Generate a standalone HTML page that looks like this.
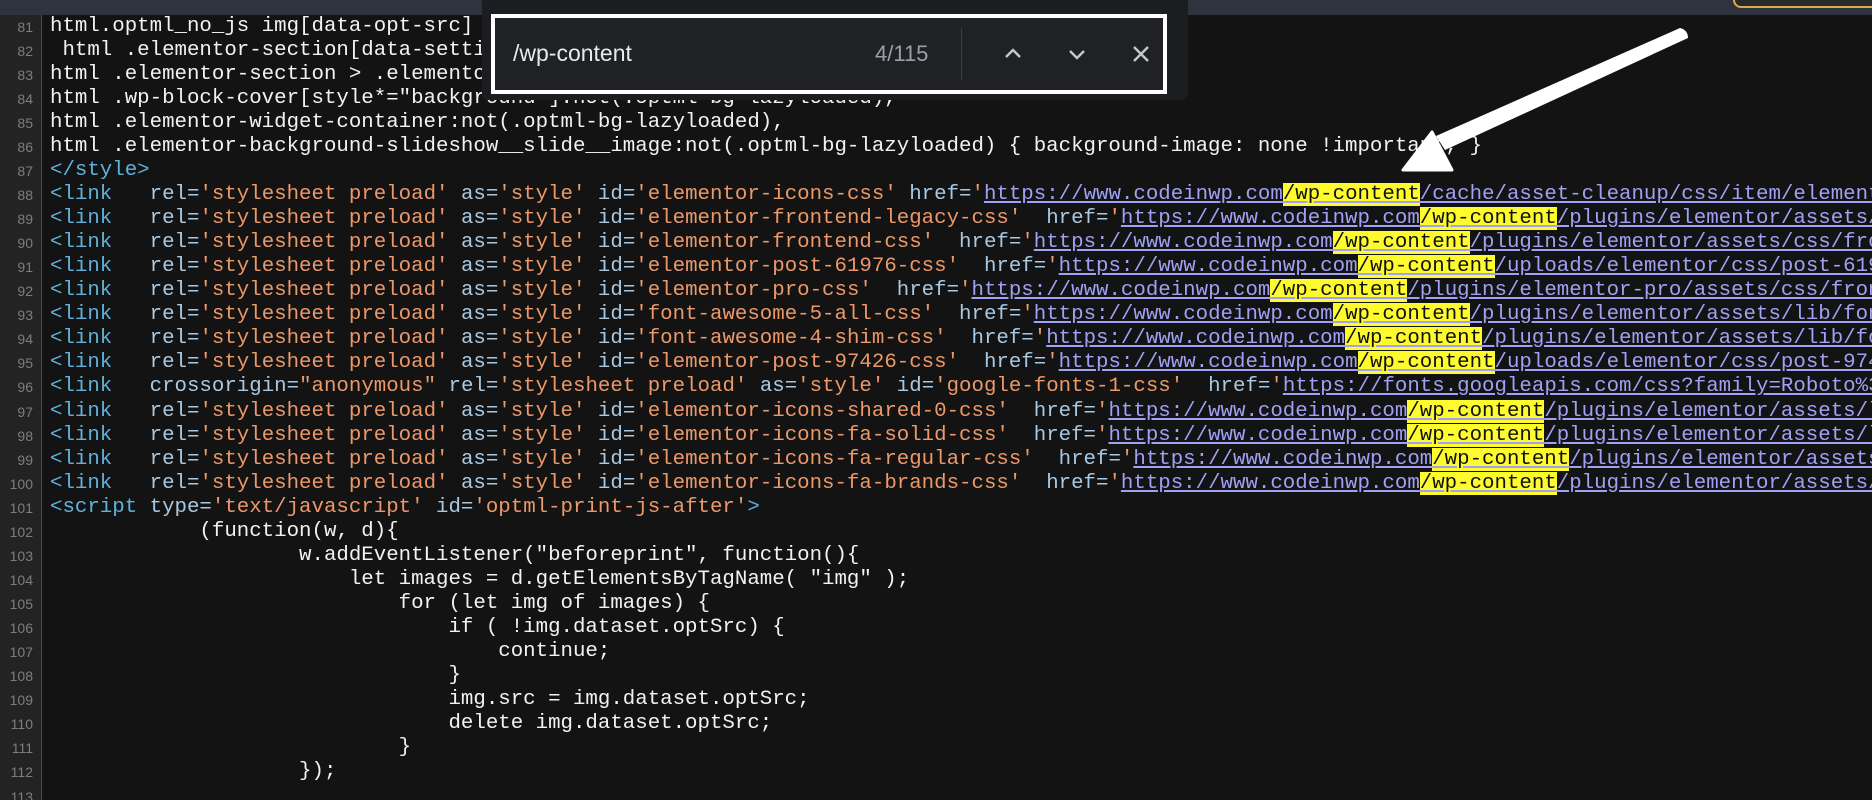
<!DOCTYPE html>
<html><head><meta charset="utf-8"><style>
html,body{margin:0;padding:0;width:1872px;height:800px;overflow:hidden;background:#131313;position:relative;}
#top{position:absolute;left:0;top:0;width:1872px;height:15px;background:#2f333d;}
#gut{position:absolute;left:0;top:15px;width:41px;height:785px;background:#232323;border-right:1px solid #4a4a4a;}
#nums{position:absolute;left:0;top:14.5px;width:33px;text-align:right;font:14px "Liberation Sans",sans-serif;color:#7d7d7d;line-height:24.07px;}
#code{position:absolute;left:50px;top:14.5px;width:1822px;height:786px;overflow:hidden;font:20.75px "Liberation Mono",monospace;color:#f2f2f2;line-height:24.07px;}
#code div{height:24.07px;white-space:pre;}
.t{color:#5fb2dc}.a{color:#a9c9e2}.v{color:#ec9869}.u{color:#a0a0f4;text-decoration:underline;text-underline-offset:2px}
.h{background:#fdfb2e;color:#111;text-decoration:underline;text-decoration-color:#a0a0f4}
#panel{position:absolute;left:482px;top:0;width:706px;height:100px;background:#1c1d20;border-radius:0 0 6px 6px;}
#box{position:absolute;left:491px;top:14px;width:668px;height:72px;border:4px solid #fff;background:#202124;font-family:"Liberation Sans",sans-serif;}
#q{position:absolute;left:18px;top:22px;font-size:23px;color:#e8eaed;}
#cnt{position:absolute;left:380px;top:23px;font-size:22px;color:#9aa0a6;}
#div{position:absolute;left:466px;top:10px;width:1px;height:52px;background:#3c3e42;}
#tr{position:absolute;left:1733px;top:-10px;width:160px;height:14px;border:2px solid #d9ab4b;border-radius:8px;background:#2a2a2a;}
</style></head><body>
<div id="top"></div>
<div id="tr"></div>
<div id="gut"></div>
<div id="nums">81<br>82<br>83<br>84<br>85<br>86<br>87<br>88<br>89<br>90<br>91<br>92<br>93<br>94<br>95<br>96<br>97<br>98<br>99<br>100<br>101<br>102<br>103<br>104<br>105<br>106<br>107<br>108<br>109<br>110<br>111<br>112<br>113</div>
<div id="code"><div>html.optml_no_js img[data-opt-src] { opacity: 0 !important; }</div><div> html .elementor-section[data-settings*="background_background"]:not(.optml-bg-lazyloaded),</div><div>html .elementor-section &gt; .elementor-background-overlay:not(.optml-bg-lazyloaded),</div><div>html .wp-block-cover[style*="background"]:not(.optml-bg-lazyloaded),</div><div>html .elementor-widget-container:not(.optml-bg-lazyloaded),</div><div>html .elementor-background-slideshow__slide__image:not(.optml-bg-lazyloaded) { background-image: none !important; }</div><div><span class="t">&lt;/style&gt;</span></div><div><span class="t">&lt;link</span>   <span class="a">rel=</span><span class="v">'stylesheet preload'</span> <span class="a">as=</span><span class="v">'style'</span> <span class="a">id=</span><span class="v">'elementor-icons-css'</span> <span class="a">href=</span><span class="v">'</span><span class="u">https://www.codeinwp.com</span><span class="u h">/wp-content</span><span class="u">/cache/asset-cleanup/css/item/elementor-icons.css</span></div><div><span class="t">&lt;link</span>   <span class="a">rel=</span><span class="v">'stylesheet preload'</span> <span class="a">as=</span><span class="v">'style'</span> <span class="a">id=</span><span class="v">'elementor-frontend-legacy-css'</span>  <span class="a">href=</span><span class="v">'</span><span class="u">https://www.codeinwp.com</span><span class="u h">/wp-content</span><span class="u">/plugins/elementor/assets/css/frontend-legacy.min.css</span></div><div><span class="t">&lt;link</span>   <span class="a">rel=</span><span class="v">'stylesheet preload'</span> <span class="a">as=</span><span class="v">'style'</span> <span class="a">id=</span><span class="v">'elementor-frontend-css'</span>  <span class="a">href=</span><span class="v">'</span><span class="u">https://www.codeinwp.com</span><span class="u h">/wp-content</span><span class="u">/plugins/elementor/assets/css/frontend.min.css</span></div><div><span class="t">&lt;link</span>   <span class="a">rel=</span><span class="v">'stylesheet preload'</span> <span class="a">as=</span><span class="v">'style'</span> <span class="a">id=</span><span class="v">'elementor-post-61976-css'</span>  <span class="a">href=</span><span class="v">'</span><span class="u">https://www.codeinwp.com</span><span class="u h">/wp-content</span><span class="u">/uploads/elementor/css/post-61976.css</span></div><div><span class="t">&lt;link</span>   <span class="a">rel=</span><span class="v">'stylesheet preload'</span> <span class="a">as=</span><span class="v">'style'</span> <span class="a">id=</span><span class="v">'elementor-pro-css'</span>  <span class="a">href=</span><span class="v">'</span><span class="u">https://www.codeinwp.com</span><span class="u h">/wp-content</span><span class="u">/plugins/elementor-pro/assets/css/frontend.min.css</span></div><div><span class="t">&lt;link</span>   <span class="a">rel=</span><span class="v">'stylesheet preload'</span> <span class="a">as=</span><span class="v">'style'</span> <span class="a">id=</span><span class="v">'font-awesome-5-all-css'</span>  <span class="a">href=</span><span class="v">'</span><span class="u">https://www.codeinwp.com</span><span class="u h">/wp-content</span><span class="u">/plugins/elementor/assets/lib/font-awesome/css/all.min.css</span></div><div><span class="t">&lt;link</span>   <span class="a">rel=</span><span class="v">'stylesheet preload'</span> <span class="a">as=</span><span class="v">'style'</span> <span class="a">id=</span><span class="v">'font-awesome-4-shim-css'</span>  <span class="a">href=</span><span class="v">'</span><span class="u">https://www.codeinwp.com</span><span class="u h">/wp-content</span><span class="u">/plugins/elementor/assets/lib/font-awesome/css/v4-shims.min.css</span></div><div><span class="t">&lt;link</span>   <span class="a">rel=</span><span class="v">'stylesheet preload'</span> <span class="a">as=</span><span class="v">'style'</span> <span class="a">id=</span><span class="v">'elementor-post-97426-css'</span>  <span class="a">href=</span><span class="v">'</span><span class="u">https://www.codeinwp.com</span><span class="u h">/wp-content</span><span class="u">/uploads/elementor/css/post-97426.css</span></div><div><span class="t">&lt;link</span>   <span class="a">crossorigin=</span><span class="v">"anonymous"</span> <span class="a">rel=</span><span class="v">'stylesheet preload'</span> <span class="a">as=</span><span class="v">'style'</span> <span class="a">id=</span><span class="v">'google-fonts-1-css'</span>  <span class="a">href=</span><span class="v">'</span><span class="u">https://fonts.googleapis.com/css?family=Roboto%3A100%2C100italic</span></div><div><span class="t">&lt;link</span>   <span class="a">rel=</span><span class="v">'stylesheet preload'</span> <span class="a">as=</span><span class="v">'style'</span> <span class="a">id=</span><span class="v">'elementor-icons-shared-0-css'</span>  <span class="a">href=</span><span class="v">'</span><span class="u">https://www.codeinwp.com</span><span class="u h">/wp-content</span><span class="u">/plugins/elementor/assets/lib/font-awesome/css/fontawesome.min.css</span></div><div><span class="t">&lt;link</span>   <span class="a">rel=</span><span class="v">'stylesheet preload'</span> <span class="a">as=</span><span class="v">'style'</span> <span class="a">id=</span><span class="v">'elementor-icons-fa-solid-css'</span>  <span class="a">href=</span><span class="v">'</span><span class="u">https://www.codeinwp.com</span><span class="u h">/wp-content</span><span class="u">/plugins/elementor/assets/lib/font-awesome/css/solid.min.css</span></div><div><span class="t">&lt;link</span>   <span class="a">rel=</span><span class="v">'stylesheet preload'</span> <span class="a">as=</span><span class="v">'style'</span> <span class="a">id=</span><span class="v">'elementor-icons-fa-regular-css'</span>  <span class="a">href=</span><span class="v">'</span><span class="u">https://www.codeinwp.com</span><span class="u h">/wp-content</span><span class="u">/plugins/elementor/assets/lib/font-awesome/css/regular.min.css</span></div><div><span class="t">&lt;link</span>   <span class="a">rel=</span><span class="v">'stylesheet preload'</span> <span class="a">as=</span><span class="v">'style'</span> <span class="a">id=</span><span class="v">'elementor-icons-fa-brands-css'</span>  <span class="a">href=</span><span class="v">'</span><span class="u">https://www.codeinwp.com</span><span class="u h">/wp-content</span><span class="u">/plugins/elementor/assets/lib/font-awesome/css/brands.min.css</span></div><div><span class="t">&lt;script</span> <span class="a">type=</span><span class="v">'text/javascript'</span> <span class="a">id=</span><span class="v">'optml-print-js-after'</span><span class="t">&gt;</span></div><div>            (function(w, d){</div><div>                    w.addEventListener("beforeprint", function(){</div><div>                        let images = d.getElementsByTagName( "img" );</div><div>                            for (let img of images) {</div><div>                                if ( !img.dataset.optSrc) {</div><div>                                    continue;</div><div>                                }</div><div>                                img.src = img.dataset.optSrc;</div><div>                                delete img.dataset.optSrc;</div><div>                            }</div><div>                    });</div><div> </div></div>

<div id="panel"></div>
<div id="box">
  <div id="q">/wp-content</div>
  <div id="cnt">4/115</div>
  <div id="div"></div>
  <svg style="position:absolute;left:506px;top:24px" width="24" height="24" viewBox="0 0 24 24"><path d="M5 15 L12 8 L19 15" fill="none" stroke="#c4c7cc" stroke-width="2.4"/></svg>
  <svg style="position:absolute;left:570px;top:24px" width="24" height="24" viewBox="0 0 24 24"><path d="M5 9 L12 16 L19 9" fill="none" stroke="#c4c7cc" stroke-width="2.4"/></svg>
  <svg style="position:absolute;left:634px;top:24px" width="24" height="24" viewBox="0 0 24 24"><path d="M5 5 L19 19 M19 5 L5 19" fill="none" stroke="#c4c7cc" stroke-width="2.4"/></svg>
</div>

<svg style="position:absolute;left:0;top:0" width="1872" height="800">
  <path d="M1680 28 Q1688 30 1688 38 L1445 150 L1436 136 Z" fill="#fff"/>
  <path d="M1403 170 L1452 170 L1432 132 Z" fill="#fff" stroke="#fff" stroke-width="3" stroke-linejoin="round"/>
</svg>
</body></html>
